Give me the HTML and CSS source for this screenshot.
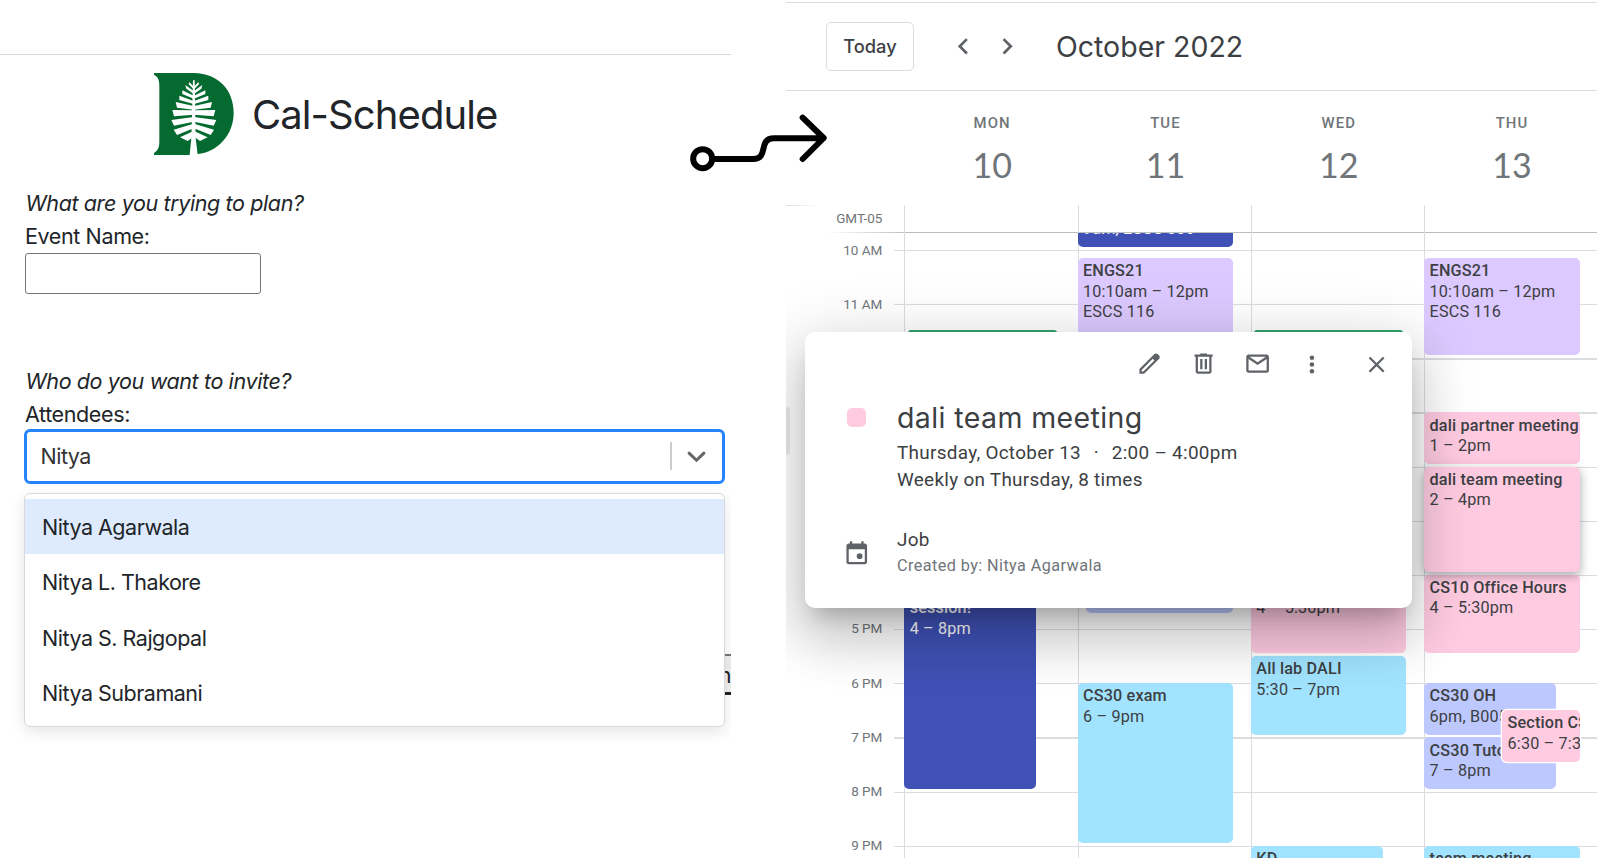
FILE: index.html
```html
<!DOCTYPE html>
<html lang="en">
<head>
<meta charset="utf-8">
<title>Cal-Schedule</title>
<link rel="stylesheet" href="styles.css">
</head>
<body>
<main class="page">
  <section class="planner">
    <header class="brand">
      <svg class="brand-logo" viewBox="0 0 240 246">
        <path fill="#046a30" d="M0 0H120C195 2 239 52 239 120C239 186 190 238 131 243L107 246H0V240C12 232 16 225 16 205V40C16 20 12 12 0 5Z"/>
        <g fill="#fff">
          <path d="M117 22h5l3 173 6 51h-24l5-51z"/>
          <g id="leaves">
            <path d="M106 27l13 14v8l-15-15zM94 36l25 18v9L97 47zM85 52l34 16v9L85 63zM76 68l43 16v9L76 81zM65 87l54 12v11L69 104zM55 111l64 1v13l-59 5zM52 141l67-9v14l-59 12zM59 170l60-18v14l-50 20zM78 193l41-19v17l-18 13z"/>
          </g>
          <use href="#leaves" transform="matrix(-1 0 0 1 239 0)"/>
        </g>
      </svg>
      <h1 class="brand-name">Cal-Schedule</h1>
    </header>
    <div class="field">
      <p class="prompt">What are you trying to plan?</p>
      <label class="label" for="event-name">Event Name:</label>
      <input class="text-input" id="event-name" type="text">
    </div>
    <div class="field field-attendees">
      <p class="prompt">Who do you want to invite?</p>
      <div class="label">Attendees:</div>
      <div class="select">
        <span class="select-value">Nitya</span>
        <div class="select-divider"></div>
        <svg class="select-arrow" viewBox="0 0 20 20"><path d="M4.500 7.500L10 12.800l5.500-5.300" fill="none" stroke="#666" stroke-width="2.200" stroke-linecap="round"/></svg>
      </div>
      <div class="hidden-button">n</div>
      <ul class="menu">
        <li class="option option-active">Nitya Agarwala</li>
        <li class="option">Nitya L. Thakore</li>
        <li class="option">Nitya S. Rajgopal</li>
        <li class="option">Nitya Subramani</li>
      </ul>
    </div>
  </section>

  <section class="calendar">
    <header class="toolbar">
      <button class="today">Today</button>
      <div class="pager">
        <svg viewBox="0 0 24 24"><path d="M15.410 7.410L14 6l-6 6 6 6 1.410-1.410L10.830 12z"/></svg>
        <svg viewBox="0 0 24 24"><path d="M10 6L8.590 7.410 13.170 12l-4.580 4.590L10 18l6-6z"/></svg>
      </div>
      <h2 class="month">October 2022</h2>
    </header>
    <div class="days">
      <div class="day"><span class="weekday">MON</span><span class="date">10</span></div>
      <div class="day"><span class="weekday">TUE</span><span class="date">11</span></div>
      <div class="day"><span class="weekday">WED</span><span class="date">12</span></div>
      <div class="day"><span class="weekday">THU</span><span class="date">13</span></div>
    </div>
    <div class="allday">
      <div class="zone">GMT-05</div>
      <div class="allday-cell"></div><div class="allday-cell"></div><div class="allday-cell"></div><div class="allday-cell"></div>
    </div>
    <div class="grid">
      <div class="hours">
        <div class="hour">10 AM</div><div class="hour">11 AM</div>
        <div class="hour"></div><div class="hour"></div><div class="hour"></div><div class="hour"></div><div class="hour"></div>
        <div class="hour">5 PM</div><div class="hour">6 PM</div><div class="hour">7 PM</div><div class="hour">8 PM</div><div class="hour">9 PM</div>
      </div>
      <div class="column">
        <div class="event outlined" style="--s:11.48;--e:12.5"></div>
        <div class="event blue narrow" style="--s:16;--e:20"><b>&nbsp;</b><b>session!</b><span>4 – 8pm</span></div>
      </div>
      <div class="column">
        <div class="event blue" style="--s:9;--e:10"><b>&nbsp;</b><span>9am, ESCS 006</span></div>
        <div class="event violet" style="--s:10.15;--e:12"><b>ENGS21</b><span>10:10am – 12pm</span><span>ESCS 116</span></div>
        <div class="event periwinkle inset" style="--s:16;--e:16.75"></div>
        <div class="event sky" style="--s:18;--e:21"><b>CS30 exam</b><span>6 – 9pm</span></div>
      </div>
      <div class="column">
        <div class="event outlined" style="--s:11.48;--e:12.5"></div>
        <div class="event pink" style="--s:16;--e:17.5"><b>&nbsp;</b><span>4 – 5:30pm</span></div>
        <div class="event sky" style="--s:17.5;--e:19"><b>All lab DALI</b><span>5:30 – 7pm</span></div>
        <div class="event sky narrow" style="--s:21;--e:22"><b>KD</b></div>
      </div>
      <div class="column">
        <div class="event violet" style="--s:10.15;--e:12"><b>ENGS21</b><span>10:10am – 12pm</span><span>ESCS 116</span></div>
        <div class="event pink" style="--s:13;--e:14"><b>dali partner meeting</b><span>1 – 2pm</span></div>
        <div class="event pink" style="--s:16;--e:17.5"><b>CS10 Office Hours</b><span>4 – 5:30pm</span></div>
        <div class="event pink lifted" style="--s:14;--e:16"><b>dali team meeting</b><span>2 – 4pm</span></div>
        <div class="event periwinkle narrow" style="--s:18;--e:19"><b>CS30 OH</b><span>6pm, B005</span></div>
        <div class="event periwinkle narrow" style="--s:19;--e:20"><b>CS30 Tutor</b><span>7 – 8pm</span></div>
        <div class="event pink overlap" style="--s:18.5;--e:19.5"><b>Section CS30</b><span>6:30 – 7:30pm</span></div>
        <div class="event sky" style="--s:21;--e:22"><b>team meeting</b></div>
      </div>
    </div>
    <div class="side-tab"></div>
    <article class="popup">
      <div class="popup-actions">
        <svg viewBox="0 0 24 24"><path d="M20.410 4.940l-1.350-1.350c-.78-.78-2.050-.78-2.830 0L13.400 6.410 3 16.820V21h4.180l10.460-10.460 2.770-2.770c.79-.78.79-2.050 0-2.830zm-14 14.120L5 19v-1.360l9.820-9.820 1.410 1.410-9.820 9.830z"/></svg>
        <svg viewBox="0 0 24 24"><path d="M15 4V3H9v1H4v2h1v13c0 1.100.9 2 2 2h10c1.100 0 2-.9 2-2V6h1V4h-5zm2 15H7V6h10v13zM9 8h2v9H9zM13 8h2v9h-2z"/></svg>
        <svg viewBox="0 0 24 24"><path d="M20 4H4c-1.100 0-2 .9-2 2v12c0 1.100.9 2 2 2h16c1.100 0 2-.9 2-2V6c0-1.100-.9-2-2-2zm-.8 2L12 10.800 4.800 6h14.400zM4 18V7.870l8 5.330 8-5.330V18H4z"/></svg>
        <svg viewBox="0 0 24 24"><circle cx="12.300" cy="6.800" r="2"/><circle cx="12.300" cy="12.800" r="2"/><circle cx="12.300" cy="18.800" r="2"/></svg>
        <svg class="close" viewBox="0 0 24 24"><path d="M19 6.410L17.590 5 12 10.590 6.410 5 5 6.410 10.590 12 5 17.590 6.410 19 12 13.410 17.590 19 19 17.590 13.410 12z"/></svg>
      </div>
      <div class="popup-row">
        <div class="popup-icon"><span class="swatch"></span></div>
        <div>
          <h3 class="popup-title">dali team meeting</h3>
          <p class="popup-text">Thursday, October 13<i class="dot">·</i>2:00 – 4:00pm</p>
          <p class="popup-text">Weekly on Thursday, 8 times</p>
        </div>
      </div>
      <div class="popup-row popup-owner">
        <div class="popup-icon">
          <svg viewBox="0 0 24 24"><path d="M19 4h-1V2h-2v2H8V2H6v2H5c-1.100 0-2 .9-2 2v14c0 1.100.9 2 2 2h14c1.100 0 2-.9 2-2V6c0-1.100-.9-2-2-2zm0 16H5V9h14v11z"/><circle cx="14.500" cy="15" r="2.500"/></svg>
        </div>
        <div>
          <p class="popup-text">Job</p>
          <p class="popup-note">Created by: Nitya Agarwala</p>
        </div>
      </div>
    </article>
  </section>
  <svg class="flow-arrow" viewBox="0 0 540 270" fill="none" stroke="#000" stroke-width="18" stroke-linecap="round" stroke-linejoin="round">
    <circle cx="98" cy="176" r="28.500"/>
    <path d="M128 177H250C298 177 262 115 312 115H460M398 53L461 114L398 177"/>
  </svg>
</main>
</body>
</html>
```
FILE: styles.css
```css
* { box-sizing: border-box; }
body { margin: 0; background: #fff; }
h1, h2, h3, p, ul { margin: 0; padding: 0; font-weight: 400; }

.page {
  position: relative;
  display: flex;
  gap: 55px;
  width: 1597px;
  height: 858px;
  overflow: hidden;
}

/* Planner form */
.planner {
  position: relative;
  width: 731px;
  padding: 54px 0 0 25px;
  overflow: hidden;
  color: #212529;
  font: 400 21.500px/33px Inter, sans-serif;
  letter-spacing: -.38px;
  background: linear-gradient(#d9d9d9, #d9d9d9) 0 54px / 100% 1px no-repeat;
}
.brand {
  display: flex;
  align-items: center;
  gap: 18px;
  height: 101px;
  padding: 19px 0 0 129px;
}
.brand-logo { width: 80px; height: 82px; }
.brand-name { padding-top: 2px; font-size: 40px; line-height: 48px; letter-spacing: -.92px; }
.field { padding-top: 32px; }
.prompt { padding-left: .5px; font-style: italic; letter-spacing: -.38px; }
.label { display: block; }
.text-input {
  display: block;
  width: 235.500px;
  height: 41px;
  border: 1.300px solid #767676;
  border-radius: 3px;
}
.field-attendees { padding-top: 70.500px; }
.select {
  display: flex;
  align-items: center;
  width: 701px;
  height: 55px;
  margin: -2px 0 0 -1px;
  padding: 0 12px 0 13.500px;
  border: 3px solid #2684ff;
  border-radius: 6px;
  color: #333;
}
.select-value { flex: 1; letter-spacing: -.5px; }
.select-divider { width: 1.500px; height: 28px; background: #ccc; }
.select-arrow { width: 27px; height: 27px; margin-left: 11.500px; }
.menu {
  position: relative;
  width: 701px;
  height: 234px;
  margin: 9px 0 0 -1px;
  padding: 5.500px 0;
  border: 1px solid #d9d9d9;
  border-radius: 6px;
  background: #fff;
  box-shadow: 0 5px 15px rgba(0, 0, 0, .1);
  list-style: none;
}
.option { height: 55.300px; padding: 12px 17px; letter-spacing: -.49px; }
.option-active { background: #deebff; }
.hidden-button {
  position: absolute;
  right: 0;
  top: 653.500px;
  width: 30px;
  height: 41px;
  border-top: 2px solid #767676;
  border-bottom: 3px solid #222;
  background: #efefef;
  line-height: 38px;
  text-align: right;
}

/* Calendar */
.calendar {
  --hour: 54.150px;
  --col: 173.300px;
  position: relative;
  width: 811px;
  overflow: hidden;
  color: #3c4043;
  font-family: Roboto, sans-serif;
}
.toolbar {
  display: flex;
  align-items: center;
  height: 89px;
  margin-top: 2px;
  padding: 0 0 1px 40px;
  border-top: 1px solid #dadce0;
  border-bottom: 1px solid #dadce0;
}
.today {
  width: 88px;
  height: 49px;
  padding: 0 0 1px;
  border: 1px solid #dadce0;
  border-radius: 5px;
  background: #fff;
  color: #3c4043;
  font: 500 18.300px Inter, sans-serif;
}
.pager { display: flex; gap: 11px; padding: 0 33px 0 33px; }
.pager svg { width: 32.500px; height: 32.500px; fill: #5f6368; }
.month { padding-top: 1px; font: 400 28.500px/36px Inter, sans-serif; }
.days {
  display: grid;
  grid-template-columns: repeat(4, var(--col));
  height: 114px;
  padding: 22px 0 0 119.500px;
}
.day { display: flex; flex-direction: column; align-items: center; color: #70757a; }
.weekday { font-size: 14.900px; font-weight: 500; line-height: 20px; letter-spacing: 1.080px; }
.date { margin-top: 10.600px; font: 400 34px/42px Lato, sans-serif; }
.allday {
  display: grid;
  grid-template-columns: 118.400px repeat(4, var(--col));
  height: 27.500px;
  background:
    linear-gradient(90deg, #dadce0, transparent) 0 0 / 34px 1px no-repeat,
    linear-gradient(90deg, transparent 40px, #bcbdbf 120px) 0 100% / 100% 1px no-repeat;
}
.zone { padding: 4px 22px 0 0; color: #70757a; font-size: 13.500px; line-height: 18px; text-align: right; }
.allday-cell { border-left: 1px solid #dadce0; }
.grid {
  position: relative;
  display: grid;
  grid-template-columns: 118.400px repeat(4, var(--col));
  height: 625.500px;
  overflow: hidden;
  background: repeating-linear-gradient(#dadce0 0 1.200px, transparent 1.200px var(--hour)) 107.500px 17.500px / 100% 100% no-repeat;
}
.hours { padding-top: 8px; }
.hour { height: var(--hour); padding-right: 22px; color: #70757a; font-size: 13.500px; line-height: 18px; text-align: right; }
.column { position: relative; border-left: 1px solid #dadce0; }
.event {
  position: absolute;
  left: -1px;
  top: calc((var(--s) - 10) * var(--hour) + 17.400px);
  width: 155.500px;
  height: calc((var(--e) - var(--s)) * var(--hour) - 2.700px);
  padding: 3.300px 0 0 5.300px;
  border-radius: 5px;
  overflow: hidden;
  font-size: 16.200px;
  line-height: 20.300px;
  letter-spacing: .16px;
  white-space: nowrap;
}
.event b, .event span { display: block; font-weight: 400; }
.event b { font-weight: 500; }
.narrow { width: 132px; }
.inset { left: 7px; width: 147px; }
.outlined { left: 2.500px; width: 149px; border-radius: 3px; background: #34a46c; }
.blue { background: #3f51b5; color: #fff; }
.violet { background: #dcc9ff; }
.periwinkle { background: #bdc8ff; }
.sky { background: #a2e4ff; }
.pink { background: #ffcbe1; }
.lifted { box-shadow: 0 4px 8px rgba(0, 0, 0, .25), 0 1px 14px rgba(0, 0, 0, .12); }
.overlap { left: 77px; width: 78px; box-shadow: 0 0 0 1.300px #fff; }
.side-tab {
  position: absolute;
  left: 0;
  top: 407px;
  width: 4px;
  height: 48px;
  border-radius: 0 4px 4px 0;
  background: #e8eaed;
}

/* Event details */
.popup {
  position: absolute;
  left: 19px;
  top: 331.700px;
  width: 607px;
  height: 276px;
  border-radius: 10px;
  background: #fff;
  box-shadow: 0 32px 51px 4px rgba(0, 0, 0, .14), 0 12px 62px 11px rgba(0, 0, 0, .12), 0 15px 20px -9px rgba(0, 0, 0, .2);
}
.popup-actions { display: flex; justify-content: flex-end; gap: 27px; padding: 18.500px 21.500px 0 0; }
.popup-actions svg { width: 27.200px; height: 27.200px; fill: #5f6368; }
.popup-actions .close { margin: 1px 0 0 11px; }
.popup-row { display: grid; grid-template-columns: 92px 1fr; padding-top: 21px; }
.popup-icon { padding-left: 37.500px; }
.popup-icon svg { display: block; width: 27.500px; height: 27.500px; margin-top: 12.500px; fill: #5f6368; }
.swatch { display: block; width: 19px; height: 19px; margin: 8.500px 0 0 4px; border-radius: 5px; background: #ffcbe1; }
.popup-title { padding-bottom: 1.500px; font: 400 28.500px/38px Inter, sans-serif; letter-spacing: .4px; }
.popup-text { font-size: 18.900px; line-height: 27px; letter-spacing: .3px; }
.dot { margin: 0 12.800px; font-style: normal; }
.popup-owner { padding-top: 33.500px; }
.popup-note { padding-top: 1px; color: #70757a; font-size: 16.200px; line-height: 24px; letter-spacing: .43px; }

.flow-arrow { position: absolute; left: 670px; top: 100px; width: 180px; height: 90px; }
```
